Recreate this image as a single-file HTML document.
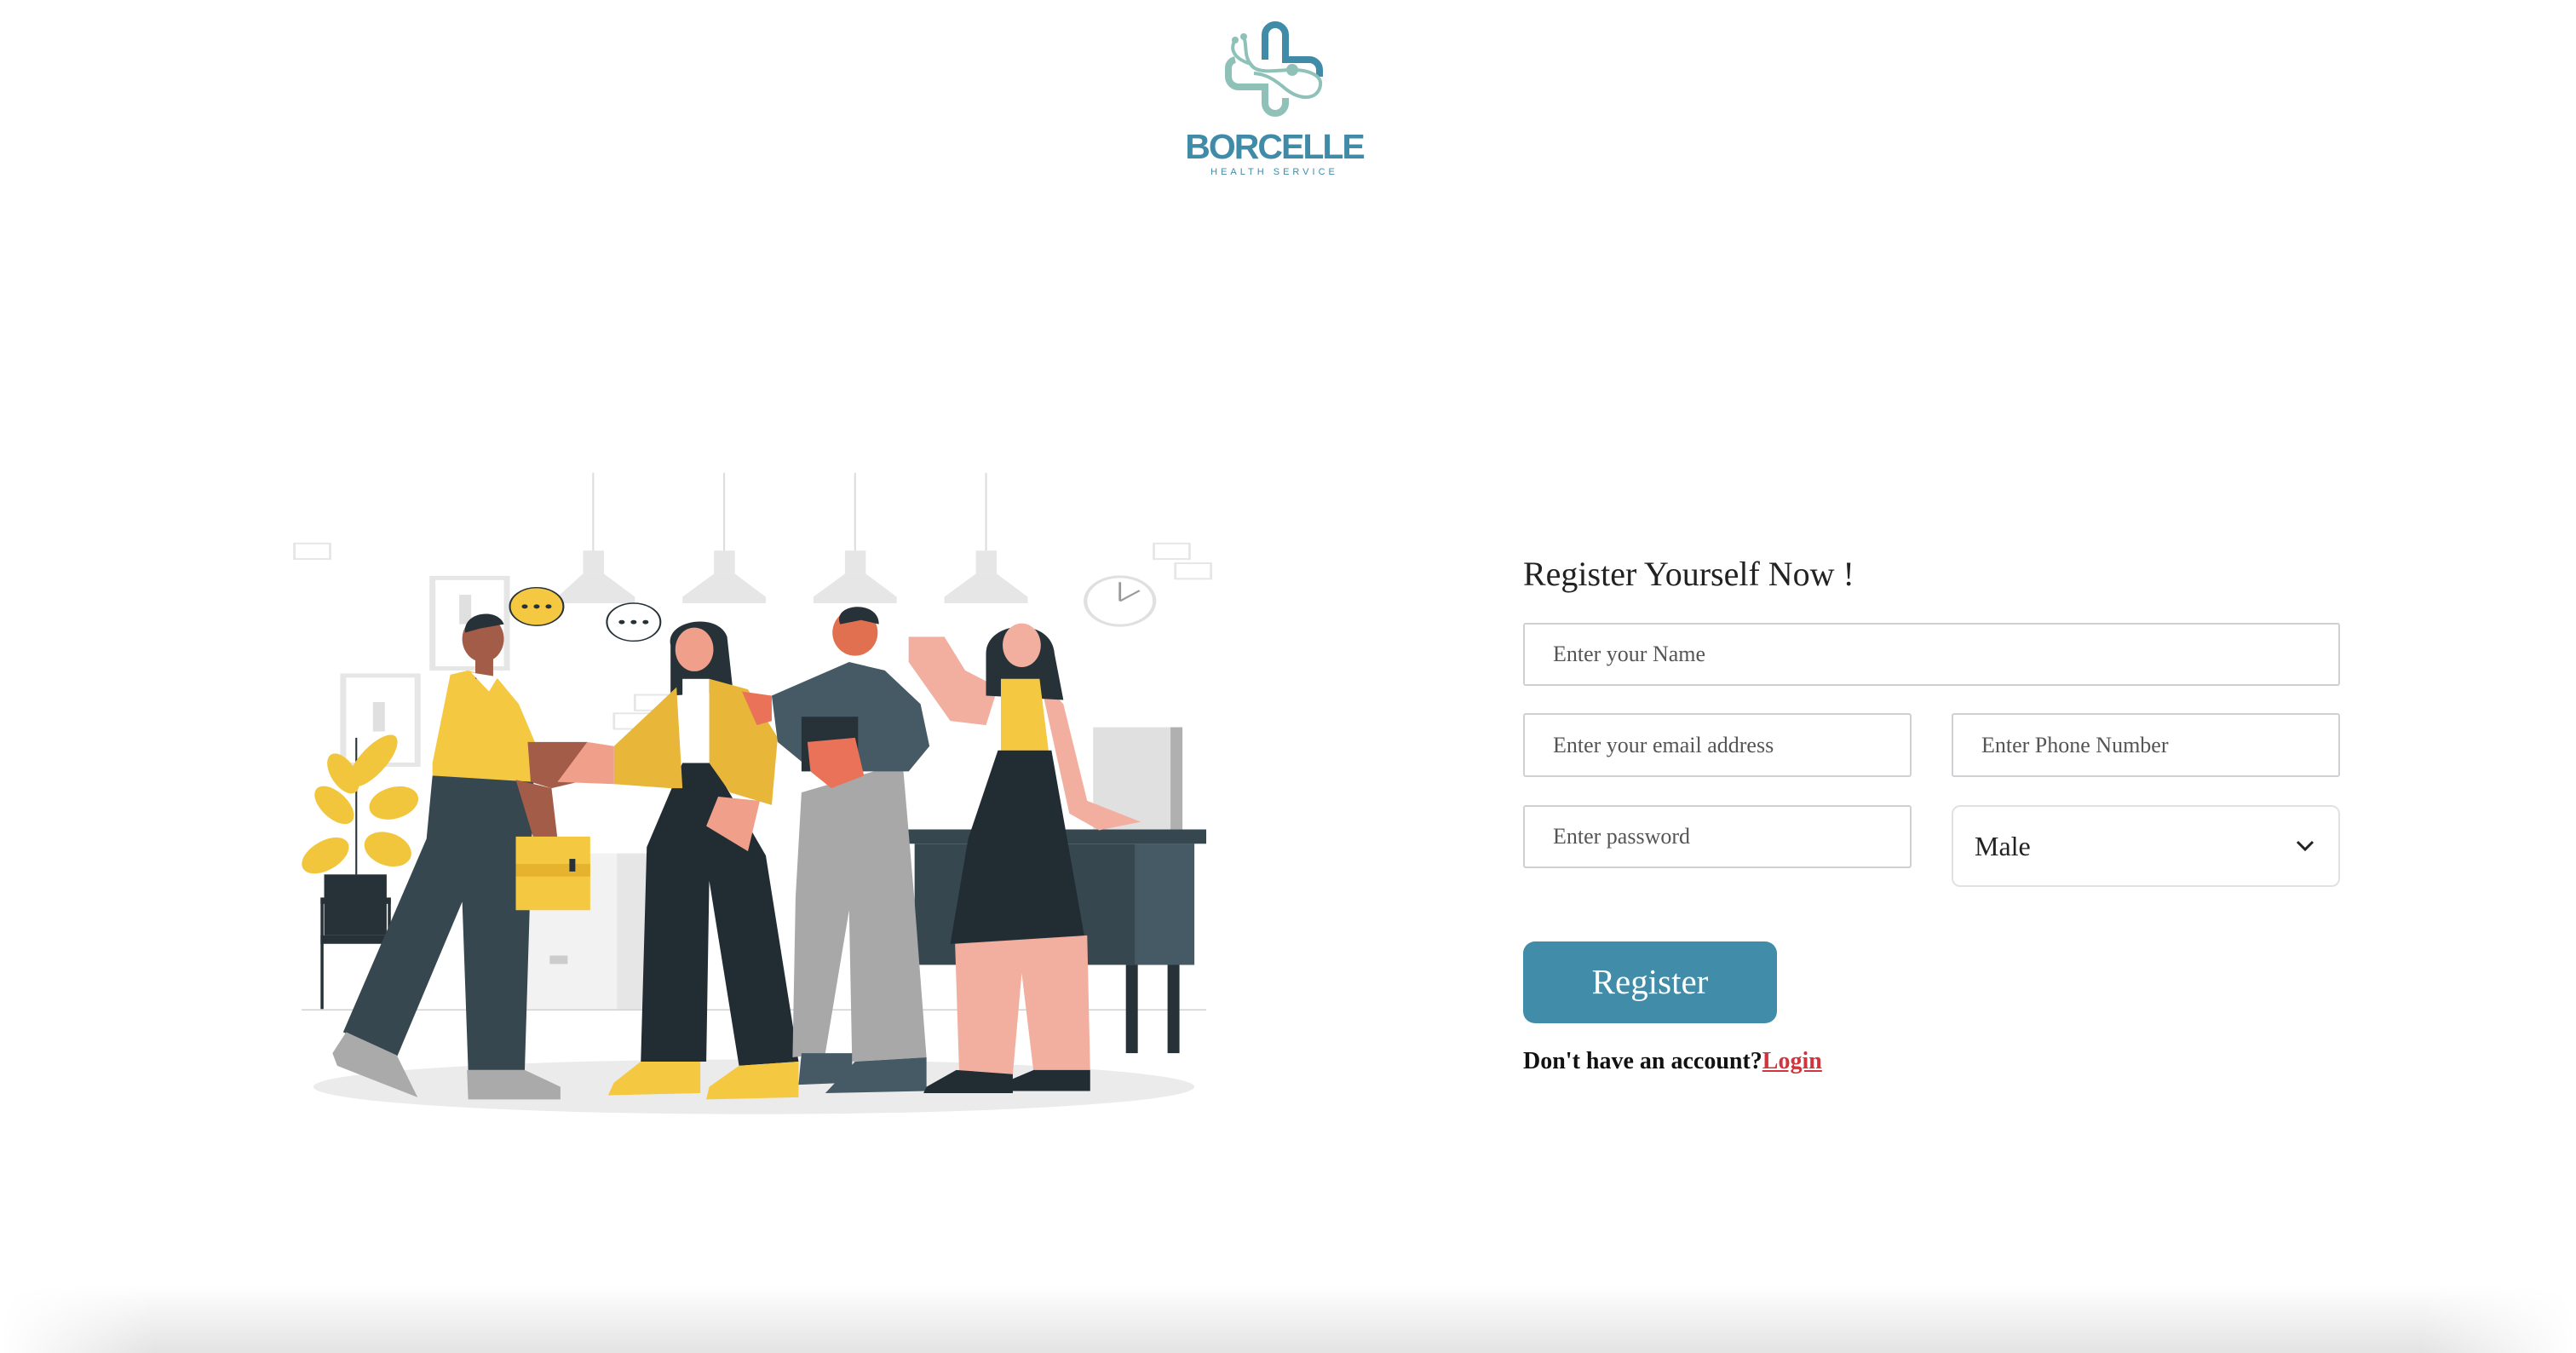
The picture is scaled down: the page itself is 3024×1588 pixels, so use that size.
<!DOCTYPE html>
<html><head><meta charset="utf-8"><style>
html,body{margin:0;padding:0;background:#fff;width:3024px;height:1588px;overflow:hidden;position:relative;font-family:"Liberation Serif",serif}
.abs{position:absolute}
.inp{position:absolute;box-sizing:border-box;border:2.5px solid #cfcfd4;border-radius:3px;background:#fff;font-size:26px;color:#555;padding-left:33px;display:flex;align-items:center}
</style></head><body>

<svg class="abs" style="left:1380px;top:20px" width="200" height="130" viewBox="0 0 200 130">
<path d="M105,50 V21 a12,12 0 0 1 24,0 V50 H157 a12,12 0 0 1 12,12 V70" fill="none" stroke="#3f8ba8" stroke-width="8"/>
<path d="M70,50 a10,10 0 0 0 -8,10 V70 a12,12 0 0 0 12,12 H105 V101 a12,12 0 0 0 24,0 V95" fill="none" stroke="#8fc1b8" stroke-width="8"/>
<path d="M70,27 C62,40 72,50 88,55 C80,45 84,32 80,23" fill="none" stroke="#8fc1b8" stroke-width="4"/>
<path d="M88,55 C95,68 120,62 137,62 C155,62 172,68 170,80 C168,95 150,100 130,85 C115,72 105,67 92,66" fill="none" stroke="#8fc1b8" stroke-width="4"/>
<circle cx="70" cy="27" r="4" fill="#8fc1b8"/><circle cx="80" cy="23" r="4" fill="#8fc1b8"/>
<circle cx="137" cy="62" r="7" fill="#8fc1b8"/>
</svg>
<div class="abs" style="left:1296px;top:148px;width:400px;text-align:center;font-family:'Liberation Sans',sans-serif;font-weight:bold;font-size:41px;letter-spacing:-2px;color:#3f8ba8;line-height:48px">BORCELLE</div>
<div class="abs" style="left:1296px;top:195px;width:400px;text-align:center;font-family:'Liberation Sans',sans-serif;font-size:11px;letter-spacing:4px;color:#3f8ba8;line-height:14px">HEALTH SERVICE</div>

<svg class="abs" style="left:340px;top:550px" width="1090" height="770" viewBox="0 0 1560 1560" preserveAspectRatio="none">
<ellipse cx="780" cy="1470" rx="740" ry="65" fill="#ebebeb"/>
<line x1="20" y1="1287" x2="1540" y2="1287" stroke="#d0d0d0" stroke-width="3"/>
<g stroke="#ddd" stroke-width="3"><line x1="510" y1="10" x2="510" y2="200"/><line x1="730" y1="10" x2="730" y2="200"/><line x1="950" y1="10" x2="950" y2="200"/><line x1="1170" y1="10" x2="1170" y2="200"/></g>
<g fill="#e6e6e6"><rect x="493" y="195" width="35" height="55"/><polygon points="493,250 528,250 580,305 580,320 450,320 450,305"/>
<rect x="713" y="195" width="35" height="55"/><polygon points="713,250 748,250 800,305 800,320 660,320 660,305"/>
<rect x="933" y="195" width="35" height="55"/><polygon points="933,250 968,250 1020,305 1020,320 880,320 880,305"/>
<rect x="1153" y="195" width="35" height="55"/><polygon points="1153,250 1188,250 1240,305 1240,320 1100,320 1100,305"/></g>
<g fill="none" stroke="#e6e6e6" stroke-width="4"><rect x="8" y="178" width="60" height="37"/><rect x="1452" y="178" width="60" height="37"/><rect x="1488" y="225" width="60" height="37"/><rect x="580" y="538" width="60" height="37"/><rect x="545" y="582" width="60" height="37"/></g>
<rect x="240" y="260" width="125" height="215" fill="none" stroke="#e6e6e6" stroke-width="10"/>
<rect x="90" y="492" width="125" height="212" fill="none" stroke="#e6e6e6" stroke-width="10"/>
<rect x="285" y="300" width="20" height="70" fill="#e0e0e0"/><rect x="140" y="555" width="20" height="70" fill="#e0e0e0"/>
<circle cx="1395" cy="315" r="58" fill="#fff" stroke="#e0e0e0" stroke-width="6"/>
<path d="M1395,315 V270 M1395,315 L1428,290" stroke="#999" stroke-width="4"/>
<rect x="1350" y="615" width="150" height="245" fill="#e0e0e0"/><rect x="1480" y="615" width="20" height="245" fill="#b0b0b0"/>
<rect x="385" y="915" width="230" height="370" fill="#f2f2f2"/><rect x="550" y="915" width="65" height="370" fill="#e6e6e6"/>
<rect x="437" y="1158" width="30" height="20" fill="#ccc"/>
<rect x="862" y="858" width="678" height="34" fill="#37474f"/>
<rect x="1050" y="892" width="470" height="288" fill="#37474f"/><rect x="1420" y="892" width="100" height="288" fill="#455a64"/>
<rect x="1405" y="1180" width="20" height="210" fill="#263238"/><rect x="1475" y="1180" width="20" height="210" fill="#263238"/>
<rect x="52" y="1020" width="118" height="15" fill="#263238"/><rect x="52" y="1020" width="5" height="265" fill="#263238"/><rect x="165" y="1020" width="5" height="265" fill="#263238"/><rect x="52" y="1110" width="118" height="20" fill="#263238"/>
<rect x="58" y="965" width="105" height="145" fill="#263238"/>
<line x1="112" y1="965" x2="112" y2="640" stroke="#263238" stroke-width="3"/>
<g fill="#f2c63c"><ellipse cx="140" cy="695" rx="25" ry="70" transform="rotate(30 140 695)"/><ellipse cx="90" cy="725" rx="22" ry="50" transform="rotate(-20 90 725)"/><ellipse cx="75" cy="800" rx="25" ry="50" transform="rotate(-30 75 800)"/><ellipse cx="175" cy="795" rx="35" ry="45" transform="rotate(50 175 795)"/><ellipse cx="60" cy="920" rx="30" ry="50" transform="rotate(40 60 920)"/><ellipse cx="165" cy="905" rx="35" ry="45" transform="rotate(-40 165 905)"/></g>
<polygon points="240,730 410,735 395,1430 300,1430 290,1030 180,1400 90,1340 230,880" fill="#37474f"/>
<polygon points="270,490 300,480 350,500 385,560 412,650 410,745 240,730 240,700" fill="#f5c842"/>
<path d="M400,650 L500,650 L540,700 L500,740 L440,760 L405,745 Z" fill="#a35c48"/>
<path d="M380,740 L440,760 L450,880 L410,880 Z" fill="#a35c48"/>
<rect x="380" y="875" width="125" height="175" fill="#f5c842"/><rect x="380" y="940" width="125" height="30" fill="#e6b32e"/><rect x="470" y="928" width="10" height="30" fill="#263238"/>
<ellipse cx="325" cy="405" rx="35" ry="55" fill="#a35c48"/><rect x="312" y="440" width="30" height="60" fill="#a35c48"/>
<path d="M295,390 C290,340 350,330 360,370 L320,380 Z" fill="#263238"/>
<polygon points="305,485 350,495 335,530" fill="#fff"/>
<polygon points="95,1340 180,1395 215,1495 80,1420 72,1390" fill="#aaa"/>
<polygon points="298,1430 395,1430 455,1470 455,1500 300,1500" fill="#aaa"/>
<circle cx="415" cy="328" r="45" fill="#f5c842" stroke="#263238" stroke-width="3"/><g fill="#263238"><circle cx="395" cy="328" r="5"/><circle cx="415" cy="328" r="5"/><circle cx="435" cy="328" r="5"/></g>
<circle cx="578" cy="365" r="45" fill="#fff" stroke="#263238" stroke-width="3"/><g fill="#263238"><circle cx="558" cy="365" r="5"/><circle cx="578" cy="365" r="5"/><circle cx="598" cy="365" r="5"/></g>
<path d="M640,420 C630,360 720,340 735,400 L745,530 L640,540 Z" fill="#263238"/>
<ellipse cx="680" cy="430" rx="32" ry="52" fill="#f0a08a"/>
<polygon points="660,700 710,700 800,920 855,1410 755,1420 705,980 700,1410 590,1410 600,900" fill="#222d33"/>
<rect x="660" y="500" width="45" height="200" fill="#fff"/>
<polygon points="545,660 650,520 660,760 640,760 545,750" fill="#e8b73a"/>
<polygon points="705,500 770,525 820,640 810,800 740,770 705,700" fill="#e8b73a"/>
<path d="M450,745 L500,650 L545,660 L545,750 Z" fill="#f0a08a"/>
<path d="M720,780 L790,790 L770,910 L700,850 Z" fill="#f0a08a"/>
<polygon points="590,1410 690,1410 690,1485 535,1490 545,1460" fill="#f5c842"/>
<polygon points="755,1420 855,1410 855,1495 700,1500 705,1470" fill="#f5c842"/>
<polygon points="860,770 1030,700 1050,1030 1070,1400 945,1410 940,1050 900,1390 845,1400 850,1020" fill="#a8a8a8"/>
<polygon points="810,540 940,460 1000,480 1060,560 1075,660 1040,720 960,720 880,720 820,650" fill="#455a64"/>
<ellipse cx="950" cy="390" rx="38" ry="55" fill="#e07050"/>
<path d="M925,370 C910,320 990,310 990,370 L960,360 Z" fill="#263238"/>
<rect x="860" y="590" width="95" height="130" fill="#263238"/>
<path d="M870,650 L950,640 L965,730 L910,760 L875,720 Z" fill="#e97258"/>
<path d="M760,530 L810,540 L810,600 L785,610 Z" fill="#e97258"/>
<polygon points="860,1390 945,1390 945,1460 855,1465" fill="#455a64"/>
<polygon points="950,1410 1070,1400 1070,1480 900,1485" fill="#455a64"/>
<path d="M1040,400 L1100,400 L1135,480 L1190,520 L1170,610 L1110,600 L1040,460 Z" fill="#f2afa0"/>
<path d="M1260,500 L1300,560 L1340,790 L1430,840 L1360,860 L1310,820 Z" fill="#f2afa0"/>
<path d="M1170,440 C1170,360 1280,350 1285,440 L1300,550 L1170,540 Z" fill="#263238"/>
<ellipse cx="1230" cy="420" rx="32" ry="52" fill="#f2afa0"/>
<polygon points="1195,500 1260,500 1275,670 1195,670" fill="#f5c842"/>
<polygon points="1190,670 1280,670 1335,1110 1110,1130 1140,880" fill="#222d33"/>
<polygon points="1118,1130 1340,1110 1345,1430 1250,1435 1230,1200 1215,1440 1125,1440" fill="#f2afa0"/>
<path d="M1070,1470 L1120,1430 L1215,1440 L1215,1485 L1065,1485 Z" fill="#222d33"/>
<path d="M1200,1460 L1250,1430 L1345,1430 L1345,1480 L1195,1480 Z" fill="#222d33"/>
</svg>

<div class="abs" style="left:1788px;top:650px;font-size:40px;color:#222;line-height:48px">Register Yourself Now !</div>
<div class="inp" style="left:1788px;top:731px;width:959px;height:74px">Enter your Name</div>
<div class="inp" style="left:1788px;top:837px;width:456px;height:75px">Enter your email address</div>
<div class="inp" style="left:2291px;top:837px;width:456px;height:75px">Enter Phone Number</div>
<div class="inp" style="left:1788px;top:945px;width:456px;height:74px">Enter password</div>
<div class="inp" style="left:2291px;top:945px;width:456px;height:96px;border-color:#dfe1e5;border-radius:10px;font-size:32px;color:#222;padding-left:25px">Male
<svg style="position:absolute;right:28px;top:38px" width="22" height="16" viewBox="0 0 22 16"><path d="M2,3 L11,12 L20,3" fill="none" stroke="#222" stroke-width="3"/></svg></div>
<div class="abs" style="left:1788px;top:1105px;width:298px;height:96px;border-radius:14px;background:#418ca9;color:#fff;font-size:41px;text-align:center;line-height:94px">Register</div>
<div class="abs" style="left:1788px;top:1228px;font-size:28px;font-weight:bold;color:#111;line-height:36px">Don't have an account?<span style="color:#d0343c;text-decoration:underline">Login</span></div>

<div class="abs" style="left:0;right:0;bottom:0;height:80px;background:linear-gradient(to bottom,rgba(0,0,0,0),rgba(0,0,0,0.11));-webkit-mask-image:linear-gradient(to right,transparent 0,#000 6%,#000 94%,transparent 100%);mask-image:linear-gradient(to right,transparent 0,#000 6%,#000 94%,transparent 100%)"></div>
</body></html>
